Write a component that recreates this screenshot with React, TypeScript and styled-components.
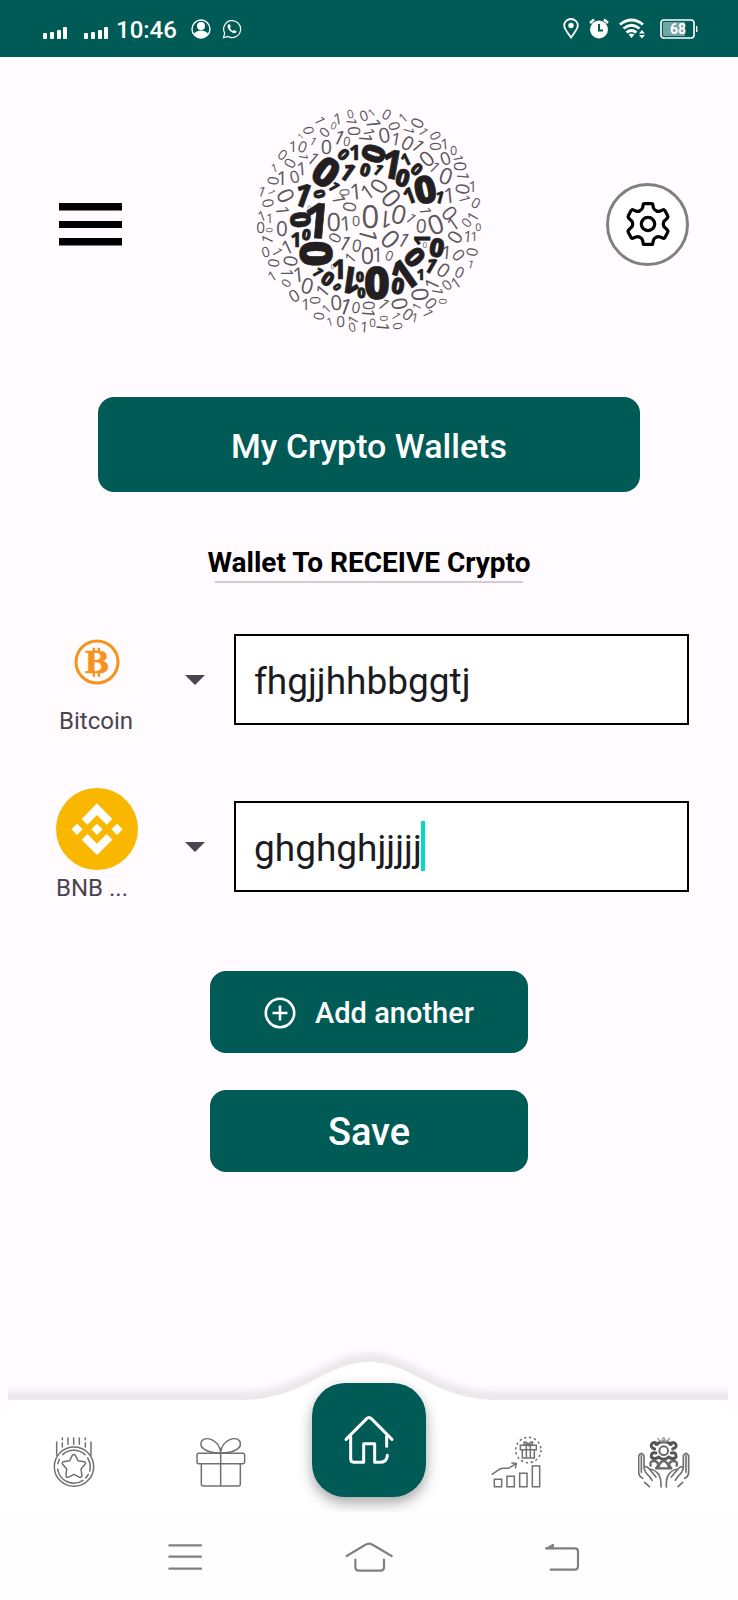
import React, { useState } from "react";
import styled, { createGlobalStyle } from "styled-components";

const teal = "#005b57";
const page = "#fffbff";

const GlobalStyle = createGlobalStyle`
  * { box-sizing: border-box; }
  body { margin: 0; background: ${page}; font-family: Roboto, "Liberation Sans", sans-serif; }
  button, input, select { font-family: inherit; margin: 0; }
  svg { display: block; flex-shrink: 0; }
`;

const Screen = styled.div`
  min-height: 100vh;
  display: flex;
  flex-direction: column;
  background: ${page};
`;

const StatusBar = styled.header`
  display: flex;
  align-items: center;
  justify-content: space-between;
  height: 57px;
  padding: 0 40px 0 43px;
  background: ${teal};
  color: #fff;
`;

const StatusGroup = styled.div<{ $gap: number }>`
  display: flex;
  align-items: center;
  gap: ${(p) => p.$gap}px;
`;

const SignalIcon = styled.svg`
  margin-top: 9px;
`;

const Clock = styled.time`
  font-size: 24px;
  line-height: 32px;
  font-weight: 500;
  margin: 2px -2px 0 -9px;
`;

const TopBar = styled.div`
  display: flex;
  align-items: center;
  justify-content: space-between;
  padding: 46px 49px 0;
`;

const IconButton = styled.button`
  display: flex;
  align-items: center;
  justify-content: center;
  padding: 0;
  border: 0;
  background: none;
  cursor: pointer;
`;

const MenuButton = styled(IconButton)`
  width: 83px;
  height: 83px;
  margin-top: 7px;
`;

const GearButton = styled(IconButton)`
  width: 83px;
  height: 83px;
  margin-top: 7px;
  border: 3px solid #808080;
  border-radius: 50%;
  background: #fff;
`;

const Content = styled.main`
  display: flex;
  flex-direction: column;
  align-items: center;
  flex: 1;
  padding: 59px 49px 40px;
`;

const Filled = styled.button<{ $size: number }>`
  display: flex;
  align-items: center;
  justify-content: center;
  gap: 19px;
  width: 100%;
  height: 82px;
  padding: 2px 0 0;
  border: 0;
  border-radius: 16px;
  background: ${teal};
  color: #fff;
  font-size: ${(p) => p.$size}px;
  line-height: 44px;
  font-weight: 500;
  cursor: pointer;
`;

const TitleButton = styled(Filled)`
  width: calc(100% - 98px);
  height: 95px;
`;

const Heading = styled.h1`
  display: flex;
  flex-direction: column;
  align-items: center;
  margin: 53px 0 51px;
  font-size: 28px;
  line-height: 36px;
  font-weight: 700;
  color: #000;
  &::after {
    content: "";
    width: calc(100% - 14px);
    height: 2px;
    background: #d0ccd0;
  }
`;

const Wallets = styled.form`
  display: flex;
  flex-direction: column;
  gap: 62px;
  width: 100%;
`;

const WalletRow = styled.div`
  display: flex;
  align-items: flex-start;
`;

const Picker = styled.label`
  display: flex;
  align-items: center;
  width: 185px;
  padding-left: 7px;
  margin-top: -13px;
  cursor: pointer;
`;

const Coin = styled.span`
  display: flex;
  flex-direction: column;
  align-items: center;
  width: 82px;
  margin-right: 47px;
`;

const CoinSelect = styled.select<{ $wide?: boolean }>`
  appearance: none;
  width: ${(p) => (p.$wide ? 82 : 76)}px;
  height: 36px;
  padding: 0;
  border: 0;
  background: none;
  color: #49454f;
  font-size: 24px;
  line-height: 36px;
`;

const Field = styled.div`
  position: relative;
  flex: 1;
`;

const Address = styled.input`
  display: block;
  width: 100%;
  height: 91px;
  padding: 4px 18px 0 18px;
  border: 2px solid #000;
  border-radius: 0;
  background: #fff;
  color: #1c1b1f;
  font-size: 37px;
  outline: none;
`;

const Caret = styled.span`
  position: absolute;
  left: 187px;
  top: 20px;
  width: 4px;
  height: 50px;
  background: #03dac6;
`;

const Actions = styled.div`
  display: flex;
  flex-direction: column;
  gap: 37px;
  width: calc(100% - 322px);
  margin-top: 65px;
`;

const TabBar = styled.nav`
  position: relative;
  display: grid;
  grid-template-columns: repeat(5, 1fr);
  height: 170px;
  padding-top: 40px;
  overflow: hidden;
`;

const Wave = styled.svg`
  position: absolute;
  inset: 0;
  width: 100%;
  height: 170px;
`;

const Tab = styled(IconButton)`
  position: relative;
  height: 52px;
  margin-top: 53px;
`;

const HomeTab = styled(IconButton)`
  position: relative;
  justify-self: center;
  width: 114px;
  height: 114px;
  border-radius: 33px;
  background: ${teal};
  box-shadow: 0 6px 14px rgba(0, 0, 0, 0.35);
`;

const SystemBar = styled.footer`
  display: flex;
  align-items: center;
  justify-content: space-between;
  height: 87px;
  padding: 0 158px 0 168px;
  background: #fefefe;
`;

const BackButton = styled(IconButton)`
  width: 44px;
  justify-content: flex-end;
`;

/* Digit marks of the logo: glyph, centre x, centre y, height, rotation. */
type Mark = [string, number, number, number, number];

const boldMarks: Mark[] = [
  ["0", 258, 246, 92, 35], ["0", 310, 194, 36, 45], ["1", 347, 188, 48, 0], ["0", 399, 192, 70, -72],
  ["1", 461, 222, 92, 10], ["0", 487, 264, 54, 15], ["1", 498, 208, 38, -25], ["0", 530, 238, 38, 40],
  ["0", 554, 298, 86, -12], ["1", 510, 316, 50, -20], ["1", 600, 322, 38, 15], ["1", 326, 248, 56, 35],
  ["0", 375, 240, 40, 15], ["1", 416, 240, 36, 40], ["1", 283, 292, 34, 60], ["1", 193, 316, 74, 20],
  ["0", 238, 313, 34, 80], ["1", 237, 390, 112, 5], ["0", 181, 390, 62, 85], ["1", 170, 450, 46, 0],
  ["0", 198, 434, 34, 10], ["0", 230, 492, 100, 90], ["1", 300, 538, 62, 0], ["1", 234, 548, 34, 60],
  ["0", 263, 567, 44, 35], ["0", 291, 592, 24, 60], ["1", 328, 574, 84, 188], ["0", 359, 560, 32, 0],
  ["0", 363, 610, 32, 0], ["0", 410, 577, 100, 0], ["0", 473, 588, 50, 10], ["1", 495, 550, 96, -35],
  ["0", 524, 502, 62, 50], ["1", 545, 447, 50, -90], ["0", 590, 473, 58, 10], ["1", 575, 528, 48, 30],
  ["1", 543, 554, 34, 0],
];

const lightMarks: Mark[] = [
  ["0", 553, 467, 18, 0], ["0", 206, 353, 14, 0], ["0", 276, 532, 14, 0],
  ["0", 313, 308, 30, 85], ["1", 349, 304, 50, -5], ["1", 383, 304, 46, -35], ["0", 415, 289, 50, -60],
  ["0", 453, 325, 58, 50], ["1", 297, 332, 40, 80], ["0", 327, 351, 40, -80], ["0", 280, 396, 56, 0],
  ["1", 319, 400, 46, -5], ["0", 347, 394, 32, 0], ["0", 390, 381, 70, 0], ["1", 433, 390, 54, 185],
  ["0", 476, 373, 58, 15], ["1", 514, 387, 34, 50], ["1", 557, 366, 36, 85], ["0", 543, 408, 42, 5],
  ["0", 586, 404, 60, -20], ["0", 628, 370, 46, 50], ["1", 640, 400, 42, -35], ["0", 283, 444, 36, -65],
  ["1", 318, 461, 48, 30], ["0", 350, 467, 38, 10], ["1", 384, 441, 56, 105], ["0", 381, 497, 52, 0],
  ["0", 451, 448, 58, 45], ["1", 494, 452, 46, 30], ["1", 415, 495, 46, 0], ["0", 447, 498, 30, 20],
  ["1", 331, 502, 34, -50],
  ["1", 241, 94, 32, 65], ["1", 294, 86, 36, -10], ["0", 330, 73, 26, -15], ["0", 370, 78, 32, -20],
  ["1", 395, 67, 24, -40], ["0", 439, 74, 32, 30], ["1", 489, 82, 30, -40], ["0", 530, 100, 38, -65],
  ["1", 401, 105, 44, 85], ["0", 462, 109, 34, 75], ["1", 335, 98, 32, 95], ["0", 343, 124, 38, 90],
  ["0", 280, 108, 22, 20], ["0", 252, 127, 32, -45], ["0", 205, 122, 32, 80], ["1", 181, 138, 18, -45],
  ["0", 432, 136, 46, -10], ["1", 387, 130, 34, 80], ["1", 377, 149, 42, 95], ["1", 300, 144, 46, 25],
  ["0", 320, 155, 28, 10], ["1", 506, 125, 34, 105], ["1", 551, 128, 30, 60], ["0", 586, 138, 32, 65],
  ["1", 221, 155, 26, 30], ["0", 258, 171, 44, 0], ["1", 160, 170, 34, 0], ["0", 187, 171, 34, 20],
  ["1", 470, 148, 40, 10], ["0", 502, 160, 44, 30], ["1", 536, 170, 42, 50], ["0", 585, 170, 34, 90],
  ["1", 615, 162, 34, -5], ["0", 640, 183, 28, 0], ["0", 127, 195, 32, 35], ["1", 190, 204, 30, 100],
  ["1", 222, 208, 40, 40], ["0", 148, 220, 34, -60], ["0", 559, 207, 48, -40], ["0", 615, 206, 40, -20],
  ["1", 585, 233, 36, 45], ["1", 655, 208, 30, 80], ["0", 660, 230, 38, 90], ["1", 104, 234, 26, -15],
  ["1", 187, 236, 42, -5], ["0", 617, 259, 50, 20], ["0", 98, 273, 34, -80], ["1", 128, 265, 44, 0],
  ["0", 163, 261, 38, -15], ["1", 669, 262, 38, 95], ["1", 699, 290, 34, 0], ["0", 666, 298, 42, -80],
  ["0", 136, 318, 50, 65], ["1", 67, 306, 32, 20], ["1", 95, 308, 22, 70], ["0", 83, 340, 34, 80],
  ["1", 630, 316, 48, -5], ["1", 674, 330, 34, 75], ["0", 707, 340, 32, 30], ["1", 128, 365, 40, 85],
  ["1", 66, 377, 32, -20], ["1", 90, 384, 30, 0], ["1", 698, 379, 34, -60], ["0", 678, 399, 30, -50],
  ["0", 61, 412, 34, 0], ["0", 88, 421, 20, 90], ["0", 125, 416, 46, 0], ["0", 714, 413, 24, 0],
  ["0", 643, 442, 44, -60], ["1", 684, 440, 36, 5], ["1", 704, 440, 30, 0], ["1", 81, 447, 36, -65],
  ["1", 143, 470, 44, -25], ["0", 76, 486, 32, -15], ["1", 113, 488, 32, 60], ["1", 622, 487, 42, 5],
  ["0", 655, 496, 38, 50], ["0", 695, 487, 34, -80], ["0", 150, 514, 42, -80], ["0", 99, 520, 34, -80],
  ["1", 694, 524, 26, 15], ["0", 610, 541, 44, 35], ["0", 658, 548, 34, 25], ["1", 140, 552, 38, 90],
  ["1", 97, 558, 32, -30], ["1", 177, 554, 46, -5], ["0", 137, 580, 28, -60], ["0", 201, 588, 48, 15],
  ["1", 575, 580, 44, -65], ["0", 619, 585, 32, -40], ["1", 648, 578, 34, -35], ["1", 592, 607, 34, 100],
  ["0", 161, 618, 38, -30], ["1", 248, 600, 42, -50], ["0", 226, 632, 32, 90], ["1", 198, 644, 36, 0],
  ["0", 288, 638, 46, -5], ["1", 319, 650, 52, 20], ["0", 347, 653, 34, 10], ["1", 259, 655, 28, -45],
  ["0", 387, 647, 36, 90], ["1", 433, 645, 38, 50], ["0", 478, 642, 48, 80], ["0", 540, 614, 52, 85],
  ["0", 572, 641, 36, 50], ["0", 607, 635, 24, 90], ["1", 530, 648, 28, -60], ["1", 565, 672, 32, 65],
  ["0", 503, 674, 36, 35], ["1", 525, 684, 30, 10], ["0", 235, 679, 32, -80], ["1", 270, 695, 26, -15],
  ["0", 301, 695, 34, 0], ["1", 339, 688, 32, -60], ["1", 385, 674, 40, 95], ["0", 430, 686, 24, 90],
  ["1", 469, 681, 28, 60], ["0", 335, 712, 28, -15], ["1", 374, 711, 34, 5], ["0", 397, 698, 26, 0],
  ["1", 428, 715, 40, 95], ["0", 472, 709, 28, 80],
];

/* A "1" sits left of its stem, so it is shifted to put the stem on the centre. */
const Digits = ({ marks, one, zero }: { marks: Mark[]; one: number; zero: number }) => (
  <>
    {marks.map(([glyph, x, y, h, turn], i) => (
      <text
        key={i}
        transform={`translate(${x} ${y}) rotate(${turn})`}
        x={glyph === "1" ? -Math.round(h / 16) : 0}
        y={Math.round(h / 2)}
        fontSize={Math.round(h / (glyph === "1" ? 0.76 : 0.74))}
        fontWeight={glyph === "1" ? one : zero}
      >
        {glyph}
      </text>
    ))}
  </>
);

const Logo = () => (
  <svg
    width="235"
    height="235"
    viewBox="35 40 705 705"
    overflow="visible"
    role="img"
    aria-label="Binary coin logo"
    textAnchor="middle"
    fontFamily="'Open Sans', 'Noto Sans', sans-serif"
    textRendering="geometricPrecision"
  >
    <g fill="#5a575a"><Digits marks={lightMarks} one={400} zero={400} /></g>
    <g fill="#231f20" stroke="#231f20" strokeWidth="2"><Digits marks={boldMarks} one={700} zero={800} /></g>
  </svg>
);

const Signal = () => (
  <SignalIcon width="25" height="12" viewBox="0 0 25 12" fill="#fff" aria-hidden="true">
    <rect x="0" y="6" width="4" height="6" rx="1" />
    <rect x="7" y="5" width="4" height="7" rx="1" />
    <rect x="14" y="3" width="4" height="9" rx="1" />
    <rect x="20" y="0" width="4" height="12" rx="1" />
  </SignalIcon>
);

const PersonIcon = () => (
  <svg width="20" height="20" viewBox="0 0 20 20" aria-hidden="true">
    <circle cx="10" cy="10" r="9" fill="none" stroke="#fff" strokeWidth="1.4" />
    <circle cx="10" cy="7" r="4" fill="#fff" />
    <path d="M3 15 Q5 11.500 10 11.500 T17 15 Q14 19 10 19 T3 15Z" fill="#fff" />
  </svg>
);

const ChatIcon = () => (
  <svg width="20" height="20" viewBox="0 0 20 20" aria-hidden="true">
    <path d="M1.500 18.700 L2.700 14.200 A8.500 8.500 0 1 1 6 17.500Z" fill="none" stroke="#fff" strokeWidth="1.200" />
    <path d="M6.500 5.200 C4.500 7 6 10 8.500 12.200 C11 14.300 13.500 15 14.800 12.800 L12.400 11 L11 12.100 Q8.800 11 7.900 8.700 L8.800 7.600 L7.800 5.200Z" fill="#fff" />
  </svg>
);

const PinIcon = () => (
  <svg width="16" height="21" viewBox="0 0 16 21" aria-hidden="true">
    <path d="M8 19.500 C4 14 1.200 11 1.200 7.600 A6.800 6.600 0 0 1 14.800 7.600 C14.800 11 12 14 8 19.500Z" fill="none" stroke="#fff" strokeWidth="1.800" />
    <circle cx="8" cy="7.500" r="2.700" fill="#fff" />
  </svg>
);

const AlarmIcon = () => (
  <svg width="20" height="21" viewBox="0 0 20 21" aria-hidden="true">
    <circle cx="10" cy="11.500" r="9" fill="#fff" />
    <path d="M1 5 L5 1.500 M19 5 L15 1.500" stroke="#fff" strokeWidth="2.400" />
    <path d="M10 6 V12.500 H14" fill="none" stroke={teal} strokeWidth="2" />
  </svg>
);

const WifiIcon = () => (
  <svg width="26" height="21" viewBox="0 0 26 21" fill="none" stroke="#fff" strokeWidth="2.800" aria-hidden="true">
    <path d="M1 6.500 Q12.500 -2.500 24 6.500 M4.500 10.500 Q12.500 4 20.500 10.500 M7.500 14.500 Q12.500 10.500 17.500 14.500" />
    <path d="M9.500 16.500 Q12.500 14.500 15.500 16.500 L12.500 20Z M20 15.500 L23 12 L26 15.500Z M20 17 L23 20.500 L26 17Z" fill="#fff" stroke="none" />
  </svg>
);

const BatteryIcon = () => (
  <svg width="38" height="20" viewBox="0 0 38 20" role="img" aria-label="Battery 68">
    <rect x="1" y="1" width="33" height="18" rx="3" fill="none" stroke="#fff" strokeWidth="1.600" />
    <rect x="3" y="3" width="22" height="14" rx="1" fill="#fff" opacity="0.45" />
    <rect x="36" y="7" width="1.400" height="6" fill="#fff" />
    <text x="18" y="15" textAnchor="middle" fontSize="14" fontWeight="700" fill="#fff">68</text>
  </svg>
);

const MenuIcon = () => (
  <svg width="63" height="43" viewBox="0 0 63 43" fill="#000" aria-hidden="true">
    <rect x="0" y="0" width="63" height="7.500" />
    <rect x="0" y="18" width="63" height="7" />
    <rect x="0" y="35" width="63" height="7.500" />
  </svg>
);

const GearIcon = () => (
  <svg width="46" height="46" viewBox="99 91 144 144" fill="none" stroke="#000" strokeWidth="10" strokeLinejoin="round" aria-hidden="true">
    <path d="M160 99 H182 Q186 99 186 103 L188 112 Q190 118 196 121 Q203 126 209 122 L217 119 Q221 117 224 121 L233 138 Q235 141 232 144 L226 150 Q219 154 219 163 Q219 172 226 176 L232 182 Q235 185 233 188 L224 205 Q221 209 217 207 L209 204 Q203 200 196 205 Q190 208 188 214 L186 223 Q186 227 182 227 H160 Q156 227 156 223 L154 214 Q152 208 146 205 Q139 200 133 204 L125 207 Q121 209 118 205 L109 188 Q107 185 110 182 L116 176 Q123 172 123 163 Q123 154 116 150 L110 144 Q107 141 109 138 L118 121 Q121 117 125 119 L133 122 Q139 126 146 121 Q152 118 154 112 L156 103 Q156 99 160 99Z" />
    <circle cx="171" cy="163" r="21" />
  </svg>
);

const BitcoinIcon = () => (
  <svg width="82" height="82" viewBox="48 4 246 246" fill="#f7931a" aria-hidden="true">
    <circle cx="171" cy="127" r="63" fill="none" stroke="#f7931a" strokeWidth="9" />
    <path d="M158 84h7v14h-7zM173 84h7v14h-7zM158 157h7v14h-7zM173 157h7v14h-7z" />
    <text x="171" y="160" textAnchor="middle" fontFamily="'DejaVu Serif', serif" fontWeight="700" fontSize="88" stroke="#f7931a" strokeWidth="2">B</text>
  </svg>
);

const BnbIcon = () => (
  <svg width="82" height="82" viewBox="48 504 246 246" aria-hidden="true">
    <circle cx="171" cy="627" r="123" fill="#f9b700" />
    <path fill="#fff" d="M171 550 L217 597 L200 614 L171 585 L142 614 L125 597Z M171 705 L217 659 L200 642 L171 671 L142 642 L125 659Z M111 611 L128 628 L111 645 L94 628Z M231 611 L248 628 L231 645 L214 628Z M171 611 L188 628 L171 645 L154 628Z" />
  </svg>
);

const DropArrow = () => (
  <svg width="20" height="10" viewBox="0 0 20 10" fill="#49454f" aria-hidden="true">
    <path d="M0 0H20L10 10Z" />
  </svg>
);

const PlusIcon = () => (
  <svg width="32" height="32" viewBox="0 0 32 32" fill="none" stroke="#fff" strokeWidth="2.600" aria-hidden="true">
    <circle cx="16" cy="16" r="14.200" />
    <path d="M16 8.500V23.500M8.500 16H23.500" />
  </svg>
);

const line = { fill: "none", stroke: "#707070", strokeWidth: 4.5, strokeLinecap: "round", strokeLinejoin: "round" } as const;

const MedalIcon = () => (
  <svg width="52" height="52" viewBox="143 287 156 156" {...line} aria-hidden="true">
    <circle cx="221" cy="379" r="59" />
    <path d="M187 343 A49 49 0 0 1 254 343 M262 353 A49 49 0 0 1 268 392 M264 402 A49 49 0 0 1 256 413 M248 420 A49 49 0 0 1 172 386 M173 370 A49 49 0 0 1 177 357" />
    <path d="M216 345 Q221 340 225 345 L233 361 L252 364 Q258 367 254 372 L242 386 L245 406 Q244 412 238 411 L221 402 L203 411 Q197 412 197 406 L199 386 L187 372 Q183 367 189 364 L208 361Z" />
    <path d="M169 305V345M272 305V345M186 293V298M186 308V320M203 293V312M220 293V312M237 293V312M255 293V298M255 308V320" />
  </svg>
);

const GiftIcon = () => (
  <svg width="52" height="52" viewBox="586 287 156 156" {...line} aria-hidden="true">
    <rect x="592" y="339" width="143" height="31" rx="6" />
    <path d="M605 371V431Q605 437 611 437H716Q722 437 722 431V371M663 336V437" />
    <path d="M663 335 C658 298 618 286 606 302 C597 320 615 337 663 338 M663 335 C668 298 708 286 720 302 C729 320 711 337 663 338" />
  </svg>
);

const ChartIcon = () => (
  <svg width="52" height="52" viewBox="365 287 156 156" {...line} strokeLinejoin="miter" strokeLinecap="butt" aria-hidden="true">
    <path d="M375 417h22v22h-22zM413 408h22v31h-22zM451 399h22v40h-22zM489 377h22v62h-22z" />
    <path d="M367 403 L392 386 Q396 384 402 384 H412 Q418 384 422 381 L440 370 M426 368 L441 369 L438 384" />
    <circle cx="477" cy="329" r="38" strokeDasharray="7 8" />
    <path d="M453 315h48v13h-48zM459 328h36v25h-36zM471 315v38M483 315v38M475 314 Q460 312 465 305 Q473 303 477 314 Q481 303 489 305 Q494 312 479 314" />
  </svg>
);

const handPath = "M810 398 V346 Q818 332 826 346 V380 Q834 376 842 386 L862 410 M810 398 Q812 410 822 414 M828 426 L842 439 M818 346 V396 M826 382 Q828 396 842 408 L850 420 M842 386 Q862 388 872 406 Q878 418 877 440";

const CommunityIcon = () => (
  <svg width="52" height="52" viewBox="808 287 156 156" {...line} aria-hidden="true">
    <path d={handPath} strokeWidth="5" />
    <path d={handPath} strokeWidth="5" transform="translate(1770 0) scale(-1 1)" />
    <circle cx="885" cy="331" r="13" stroke="#666" strokeWidth="6" />
    <path d="M862 312 Q885 296 908 312 M858 326 Q842 320 850 310 Q858 302 866 312 M912 326 Q928 320 920 310 Q912 302 904 312 M862 338 Q846 334 848 350 Q856 360 870 350 M908 338 Q924 334 922 350 Q914 360 900 350 M870 350 Q885 364 900 350" stroke="#555" strokeWidth="9" />
    <path d="M868 294 Q876 308 885 302 Q894 308 902 294 M881 298 L885 292 L889 298" stroke="#999" />
    <path d="M846 376 Q842 362 856 362 Q868 362 870 378 Q876 362 885 362 Q894 362 900 378 Q902 362 914 362 Q928 362 924 376 M862 384 H908 M870 372 L864 382 M900 372 L906 382" stroke="#666" strokeWidth="7" />
  </svg>
);

const HomeIcon = () => (
  <svg width="52" height="52" viewBox="1029 222 156 156" fill="none" stroke="#fff" strokeWidth="9" strokeLinecap="round" strokeLinejoin="round" aria-hidden="true">
    <path d="M1038 298 L1100 236 Q1107 229 1114 236 L1176 298" />
    <path d="M1052 290 V356 Q1052 367 1064 367 H1091 V311 H1124 V367 H1138 Q1161 367 1162 346 M1160 288 V319" />
  </svg>
);

const gray = { fill: "none", stroke: "#808080", strokeWidth: 6.5, strokeLinecap: "round", strokeLinejoin: "round" } as const;

const RecentsIcon = () => (
  <svg width="34" height="28" viewBox="504 609 102 84" {...gray} aria-hidden="true">
    <path d="M508 616H603M508 650H603M508 686H603" />
  </svg>
);

const LauncherIcon = () => (
  <svg width="48" height="30" viewBox="1036 603 144 90" {...gray} aria-hidden="true">
    <path d="M1041 645 L1096 612 Q1108 604 1120 612 L1176 645 M1067 656 V679 Q1067 689 1077 689 H1143 Q1153 689 1153 679 V656" />
  </svg>
);

const BackIcon = () => (
  <svg width="36" height="30" viewBox="528 603 108 90" {...gray} aria-hidden="true">
    <path d="M534 622 H620 Q630 622 630 632 V676 Q630 686 620 686 H548" />
    <path d="M534 622 L556 609 V622Z" fill="#808080" strokeWidth="3" />
  </svg>
);

export default function App() {
  const [btc, setBtc] = useState("fhgjjhhbbggtj");
  const [bnb, setBnb] = useState("ghghghjjjjj");

  return (
    <Screen>
      <GlobalStyle />
      <StatusBar>
        <StatusGroup $gap={16}>
          <Signal />
          <Signal />
          <Clock>10:46</Clock>
          <StatusGroup $gap={11}>
            <PersonIcon />
            <ChatIcon />
          </StatusGroup>
        </StatusGroup>
        <StatusGroup $gap={15}>
          <StatusGroup $gap={10}>
            <PinIcon />
            <AlarmIcon />
            <WifiIcon />
          </StatusGroup>
          <BatteryIcon />
        </StatusGroup>
      </StatusBar>

      <TopBar>
        <MenuButton type="button" aria-label="Menu"><MenuIcon /></MenuButton>
        <Logo />
        <GearButton type="button" aria-label="Settings"><GearIcon /></GearButton>
      </TopBar>

      <Content>
        <TitleButton type="button" $size={34}>My Crypto Wallets</TitleButton>
        <Heading>Wallet To RECEIVE Crypto</Heading>

        <Wallets id="wallets" onSubmit={(e) => e.preventDefault()}>
          <WalletRow>
            <Picker>
              <Coin>
                <BitcoinIcon />
                <CoinSelect aria-label="First coin"><option>Bitcoin</option></CoinSelect>
              </Coin>
              <DropArrow />
            </Picker>
            <Field>
              <Address aria-label="Bitcoin wallet address" value={btc} onChange={(e) => setBtc(e.target.value)} />
            </Field>
          </WalletRow>
          <WalletRow>
            <Picker>
              <Coin>
                <BnbIcon />
                <CoinSelect $wide aria-label="Second coin"><option>BNB ...</option></CoinSelect>
              </Coin>
              <DropArrow />
            </Picker>
            <Field>
              <Address aria-label="BNB wallet address" value={bnb} onChange={(e) => setBnb(e.target.value)} />
              <Caret />
            </Field>
          </WalletRow>
        </Wallets>

        <Actions>
          <Filled type="button" $size={29}><PlusIcon />Add another</Filled>
          <Filled type="submit" form="wallets" $size={38}>Save</Filled>
        </Actions>
      </Content>

      <TabBar aria-label="Main">
        <Wave viewBox="0 -10 738 170" preserveAspectRatio="none" aria-hidden="true">
          <defs>
            <filter id="soft" x="-5%" y="-20%" width="110%" height="140%"><feGaussianBlur stdDeviation="3" /></filter>
            <clipPath id="edge"><rect x="8" y="-10" width="720" height="170" /></clipPath>
          </defs>
          <g clipPath="url(#edge)">
            <path d="M0 38 H240 C305 38 325 0 369 0 S433 38 498 38 H738 V80 H0Z" fill="#ebe7eb" filter="url(#soft)" />
            <path d="M0 47 H240 C305 47 325 9 369 9 S433 47 498 47 H738 V160 H0Z" fill="#fff" />
          </g>
          <rect x="0" y="58" width="738" height="102" fill="#fff" />
        </Wave>
        <Tab type="button" aria-label="Rewards"><MedalIcon /></Tab>
        <Tab type="button" aria-label="Gifts"><GiftIcon /></Tab>
        <HomeTab type="button" aria-label="Home"><HomeIcon /></HomeTab>
        <Tab type="button" aria-label="Growth"><ChartIcon /></Tab>
        <Tab type="button" aria-label="Community"><CommunityIcon /></Tab>
      </TabBar>

      <SystemBar>
        <IconButton type="button" aria-label="Recent apps"><RecentsIcon /></IconButton>
        <IconButton type="button" aria-label="Launcher"><LauncherIcon /></IconButton>
        <BackButton type="button" aria-label="Back"><BackIcon /></BackButton>
      </SystemBar>
    </Screen>
  );
}
